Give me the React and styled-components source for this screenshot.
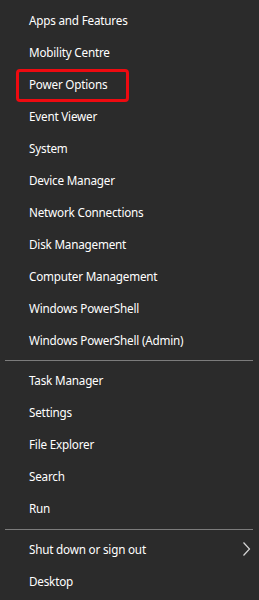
import React from "react";
import styled, { createGlobalStyle } from "styled-components";

const GlobalStyle = createGlobalStyle`
  html, body {
    margin: 0;
    padding: 0;
    background: #2b2b2b;
  }
`;

const Menu = styled.div`
  width: 259px;
  height: 600px;
  box-sizing: border-box;
  padding-top: 4px;
  background: #2b2b2b;
  font-family: "Noto Sans", "Open Sans", sans-serif;
  font-size: 11.7px;
  letter-spacing: -0.2px;
  color: #ffffff;
  display: flex;
  flex-direction: column;
`;

const Item = styled.div`
  position: relative;
  height: 32px;
  display: flex;
  align-items: center;
  justify-content: space-between;
  padding: 0 8px 0 29px;

  ${props =>
    props.highlighted &&
    `
    &::after {
      content: "";
      position: absolute;
      left: 16px;
      top: 1px;
      width: 113px;
      height: 33px;
      border: 3px solid #ee0a10;
      border-radius: 4px;
      box-sizing: border-box;
    }
  `}
`;

const Separator = styled.div`
  height: 1px;
  margin: ${props => (props.wide ? "5px 6px 3px 5px" : "4px 6px 3px 5px")};
  background: #7c7c7c;
`;

const Chevron = () => (
  <svg width="9" height="16" viewBox="0 0 9 16">
    <path d="M1.5 1.5 L7.5 8 L1.5 14.5" fill="none" stroke="#d6d6d6" strokeWidth="1.2" />
  </svg>
);

const groups = [
  [
    "Apps and Features",
    "Mobility Centre",
    "Power Options",
    "Event Viewer",
    "System",
    "Device Manager",
    "Network Connections",
    "Disk Management",
    "Computer Management",
    "Windows PowerShell",
    "Windows PowerShell (Admin)"
  ],
  ["Task Manager", "Settings", "File Explorer", "Search", "Run"],
  ["Shut down or sign out", "Desktop"]
];

const App = () => (
  <>
    <GlobalStyle />
    <Menu>
      {groups.map((group, i) => (
        <React.Fragment key={i}>
          {i > 0 && <Separator wide={i === 2} />}
          {group.map(label => (
            <Item key={label} highlighted={label === "Power Options"}>
              <span>{label}</span>
              {label === "Shut down or sign out" && <Chevron />}
            </Item>
          ))}
        </React.Fragment>
      ))}
    </Menu>
  </>
);

export default App;
